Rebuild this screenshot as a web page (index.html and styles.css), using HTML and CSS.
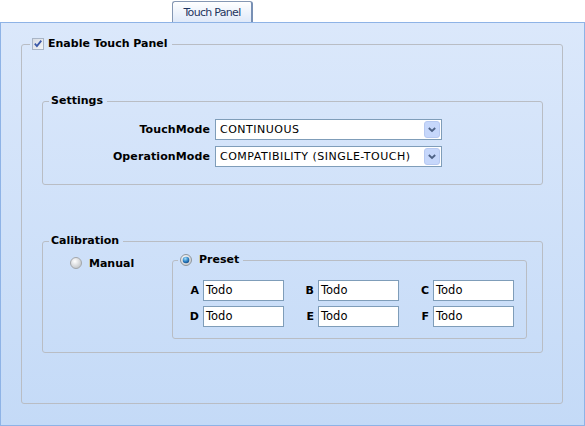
FILE: index.html
```html
<!DOCTYPE html>
<html>
<head>
<meta charset="utf-8">
<title>Touch Panel</title>
<link rel="stylesheet" href="styles.css">
</head>
<body>
<div class="tabbar"><div class="tab">Touch Panel</div></div>
<div class="panel">
  <fieldset class="group outer">
    <legend class="legend outer-legend">
      <svg class="check" width="12" height="12" viewBox="0 0 12 12">
        <defs><linearGradient id="cb" x1="0" y1="0" x2="1" y2="1"><stop offset="0" stop-color="#d6dbe3"/><stop offset="1" stop-color="#f5f6f8"/></linearGradient></defs>
        <rect x="0.5" y="0.5" width="11" height="11" fill="url(#cb)" stroke="#a9b5c6"/>
        <path d="M2.8 5.6 L4.9 8 L9.3 2.6" fill="none" stroke="#3a58a8" stroke-width="1.8"/>
      </svg>Enable Touch Panel</legend>

    <fieldset class="group settings">
      <legend class="legend">Settings</legend>
      <div class="form">
        <span class="lbl">TouchMode</span>
        <div class="select"><span class="val">CONTINUOUS</span>
          <svg class="drop" width="16" height="17" viewBox="0 0 16 17"><rect x="0.5" y="0.5" width="15" height="16" rx="2.5" fill="#c6d7fb" stroke="#b7c9f1"/><path d="M4.8 7 L8 10 L11.2 7" fill="none" stroke="#4d6185" stroke-width="1.8"/></svg>
        </div>
        <span class="lbl">OperationMode</span>
        <div class="select"><span class="val">COMPATIBILITY (SINGLE-TOUCH)</span>
          <svg class="drop" width="16" height="17" viewBox="0 0 16 17"><rect x="0.5" y="0.5" width="15" height="16" rx="2.5" fill="#c6d7fb" stroke="#b7c9f1"/><path d="M4.8 7 L8 10 L11.2 7" fill="none" stroke="#4d6185" stroke-width="1.8"/></svg>
        </div>
      </div>
    </fieldset>

    <fieldset class="group calib">
      <legend class="legend">Calibration</legend>
      <div class="calrow">
        <div class="opt manual">
          <svg class="radio" width="12" height="12" viewBox="0 0 12 12">
            <defs><radialGradient id="ru" cx="0.4" cy="0.35" r="0.7"><stop offset="0" stop-color="#ffffff"/><stop offset="1" stop-color="#bfc2c6"/></radialGradient></defs>
            <circle cx="6" cy="6" r="5.5" fill="url(#ru)" stroke="#a3a7ab"/>
          </svg><span>Manual</span>
        </div>
        <fieldset class="group preset">
          <legend class="legend preset-legend">
            <svg class="radio" width="12" height="12" viewBox="0 0 12 12">
              <defs>
                <radialGradient id="rc" cx="0.4" cy="0.35" r="0.7"><stop offset="0" stop-color="#ffffff"/><stop offset="1" stop-color="#c6c9cd"/></radialGradient>
                <radialGradient id="rd" cx="0.4" cy="0.3" r="0.7"><stop offset="0" stop-color="#a6e0fb"/><stop offset="0.6" stop-color="#2f84c6"/><stop offset="1" stop-color="#154e8c"/></radialGradient>
              </defs>
              <circle cx="6" cy="6" r="5.5" fill="url(#rc)" stroke="#8e969d"/>
              <circle cx="6" cy="6" r="3.3" fill="url(#rd)"/>
            </svg><span>Preset</span>
          </legend>
          <div class="grid">
            <div class="cell"><span class="key">A</span><div class="input">Todo</div></div>
            <div class="cell"><span class="key">B</span><div class="input">Todo</div></div>
            <div class="cell"><span class="key">C</span><div class="input">Todo</div></div>
            <div class="cell"><span class="key">D</span><div class="input">Todo</div></div>
            <div class="cell"><span class="key">E</span><div class="input">Todo</div></div>
            <div class="cell"><span class="key">F</span><div class="input">Todo</div></div>
          </div>
        </fieldset>
      </div>
    </fieldset>
  </fieldset>
</div>
</body>
</html>
```

FILE: styles.css
```css
html, body {
  margin: 0;
  padding: 0;
}
body {
  width: 585px;
  height: 426px;
  overflow: hidden;
  background: #ffffff;
  font-family: "DejaVu Sans", Verdana, sans-serif;
  font-size: 11px;
  color: #000;
}
.tabbar {
  height: 22px;
  box-sizing: border-box;
  padding: 1px 0 0 172px;
  display: flex;
}
.tab {
  width: 81px;
  height: 21px;
  box-sizing: border-box;
  border: 1px solid #8597b3;
  border-right: 2px solid #7890b4;
  border-bottom: none;
  border-radius: 3px 3px 0 0;
  background: linear-gradient(#ffffff, #dfe9f9);
  text-align: center;
  line-height: 21px;
  letter-spacing: -0.7px;
  color: #1e3560;
}
.panel {
  width: 585px;
  height: 404px;
  box-sizing: border-box;
  border: 1px solid #8eb3e6;
  background: linear-gradient(#dbe8fb, #c4daf7);
  padding: 14px 0 0 20px;
}
.group {
  margin: 0;
  padding: 0;
  border: 1px solid #b9bdc4;
  border-radius: 3px;
  min-width: 0;
  box-sizing: border-box;
}
.legend {
  height: 14px;
  line-height: 14px;
  padding: 0 4px 0 2px;
  margin-left: 6px;
  font-weight: bold;
  display: flex;
  align-items: center;
}
.outer {
  width: 542px;
  height: 367px;
}
.outer-legend {
  margin-left: 8px;
}
.check {
  margin-right: 4px;
  display: block;
}
.settings {
  margin: 43px 0 0 20px;
  width: 501px;
  height: 91px;
}
.form {
  margin-top: 11px;
  display: grid;
  grid-template-columns: 167px 227px;
  column-gap: 5px;
  row-gap: 6px;
  align-items: center;
}
.lbl {
  font-weight: bold;
  text-align: right;
  letter-spacing: 0.1px;
}
.select {
  height: 21px;
  box-sizing: border-box;
  border: 1px solid #7f9db9;
  background: #fff;
  display: flex;
  align-items: center;
  padding-left: 4px;
}
.val {
  flex: 1;
  letter-spacing: 0.5px;
}
.drop {
  display: block;
  margin-right: 1px;
}
.calib {
  margin: 49px 0 0 20px;
  width: 501px;
  height: 119px;
}
.calrow {
  margin-top: 5px;
  display: flex;
  align-items: flex-start;
}
.opt {
  display: flex;
  align-items: center;
  font-weight: bold;
  height: 14px;
}
.radio {
  display: block;
  margin-right: 7px;
}
.manual {
  margin: 3px 0 0 27px;
  width: 102px;
}
.preset {
  width: 355px;
  height: 86px;
}
.preset-legend {
  margin-left: 5px;
}
.grid {
  margin-top: 13px;
  padding-left: 15px;
  display: grid;
  grid-template-columns: repeat(3, 96px);
  column-gap: 19px;
  row-gap: 5px;
}
.cell {
  display: flex;
  align-items: center;
}
.key {
  width: 11px;
  margin-right: 4px;
  text-align: right;
  font-weight: bold;
}
.input {
  width: 81px;
  height: 21px;
  box-sizing: border-box;
  border: 1px solid #7f9db9;
  background: #fff;
  padding-left: 2px;
  line-height: 19px;
  font-size: 11.5px;
}
```
